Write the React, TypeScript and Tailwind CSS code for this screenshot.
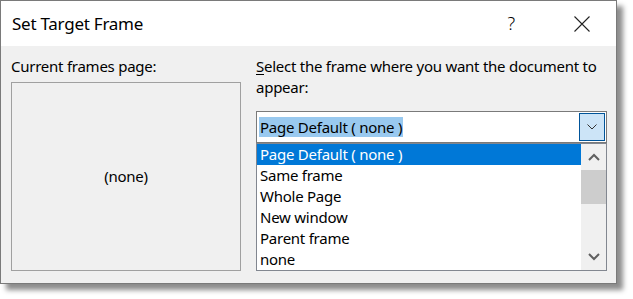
import { FC } from 'react';

const items = ['Page Default ( none )', 'Same frame', 'Whole Page', 'New window', 'Parent frame', 'none'];

const Chevron: FC<{ up?: boolean }> = ({ up }) => (
  <svg width="12" height="8" viewBox="0 0 12 8">
    <path d={up ? 'M1 7 L6 2 L11 7' : 'M1 1 L6 6 L11 1'} fill="none" stroke="#606060" strokeWidth="2" />
  </svg>
);

const TargetList: FC = () => (
  <div className="flex h-[128px] border border-[#828790] bg-white">
    <div className="flex flex-1 flex-col">
      {items.map((label, i) => (
        <div
          key={label}
          className={`h-[21px] pl-[3px] leading-[21px] ${i === 0 ? 'bg-[#0078d7] text-white' : 'text-black'}`}
        >
          {label}
        </div>
      ))}
    </div>
    <div className="flex w-[25px] flex-col bg-[#f0f0f0]">
      <div className="flex h-[26px] items-center justify-center">
        <Chevron up />
      </div>
      <div className="h-[34px] bg-[#cdcdcd]" />
      <div className="flex-1" />
      <div className="flex h-[26px] items-center justify-center">
        <Chevron />
      </div>
    </div>
  </div>
);

export default function App() {
  return (
    <div
      className="h-[299px] w-[633px] overflow-hidden bg-white text-[15px] tracking-[-0.25px] text-black"
      style={{ fontFamily: '"Noto Sans", "Open Sans", sans-serif' }}
    >
      <div className="flex h-[284px] w-[617px] flex-col border border-[#7a7a7a] bg-[#f0f0f0] shadow-[6px_6px_5px_rgba(0,0,0,0.45)]">
        {/* title bar */}
        <div className="flex h-[45px] items-center bg-white pl-[11px] pr-[26px]">
          <span className="flex-1 text-[17px]">Set Target Frame</span>
          <span className="mr-[59px] text-[18px] font-light">?</span>
          <svg width="16" height="16" viewBox="0 0 16 16">
            <path d="M0.5 0.5 L15.5 15.5 M15.5 0.5 L0.5 15.5" stroke="#222" strokeWidth="1.1" />
          </svg>
        </div>

        {/* body */}
        <div className="flex flex-1 gap-[15px] pl-[10px] pr-[9px] pt-[10px]">
          <div className="flex w-[230px] flex-col">
            <div className="h-[21px] leading-[21px]">Current frames page:</div>
            <div className="mt-[5px] flex h-[189px] items-center justify-center border border-[#a0a0a0]">
              (none)
            </div>
          </div>

          <div className="flex flex-1 flex-col">
            <p className="leading-[21px] first-letter:underline first-letter:underline-offset-2">
              Select the frame where you want the document to appear:
            </p>
            <div className="mt-[13px] flex h-[32px] items-center border border-[#7a7a7a] bg-white pl-[2px] pr-[1px]">
              <span className="flex-1">
                <span className="bg-[#99c9ef] px-[1px] leading-[21px]">Page Default ( none )</span>
              </span>
              <div className="flex h-[28px] w-[26px] items-center justify-center border border-[#005499] bg-[#cce4f7]">
                <svg width="10" height="6" viewBox="0 0 10 6">
                  <path d="M0.5 0.5 L5 5 L9.5 0.5" fill="none" stroke="#333" strokeWidth="1" />
                </svg>
              </div>
            </div>
            <TargetList />
          </div>
        </div>
      </div>
    </div>
  );
}
